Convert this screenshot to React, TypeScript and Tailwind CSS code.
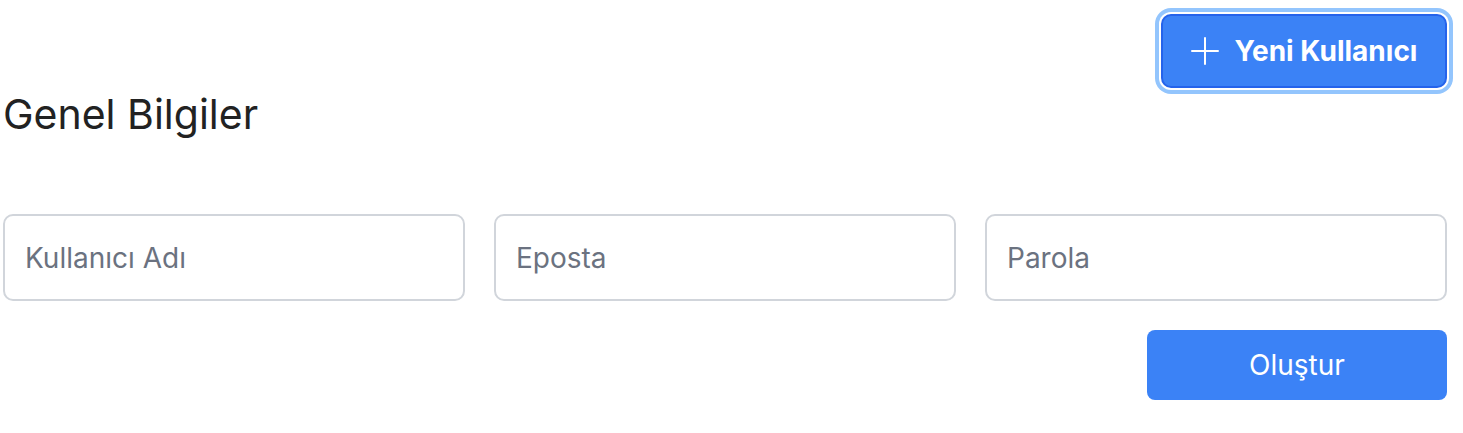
import React, { useState } from 'react';

const fields = [
  { name: 'username', placeholder: 'Kullanıcı Adı', type: 'text' },
  { name: 'email', placeholder: 'Eposta', type: 'email' },
  { name: 'password', placeholder: 'Parola', type: 'password' },
];

const PlusIcon = () => (
  <svg width="28" height="28" viewBox="0 0 28 28" fill="none" stroke="currentColor" strokeWidth="2" strokeLinecap="round">
    <path d="M1 14h26M14 1v26" />
  </svg>
);

const App: React.FC = () => {
  const [formData, setFormData] = useState({ username: '', email: '', password: '' });

  const handleChange = (e: React.ChangeEvent<HTMLInputElement>) => {
    setFormData({ ...formData, [e.target.name]: e.target.value });
  };

  return (
    <div className="min-h-screen bg-white pl-[3px] pr-4 pt-[14px] font-['Inter',sans-serif]">
      {/* Header action */}
      <div className="flex justify-end">
        <button className="flex h-[74px] w-[286px] items-center justify-center gap-4 rounded-[10px] border-2 border-[#2563eb] bg-[#3b82f6] text-[28px] font-bold text-white ring-4 ring-[#93c5fd] ring-offset-2">
          <PlusIcon />
          Yeni Kullanıcı
        </button>
      </div>

      <h2 className="mt-0.5 text-[41px] leading-[48px] text-[#222222]">Genel Bilgiler</h2>

      {/* Form */}
      <div className="mt-[76px] grid grid-cols-3 gap-[29px]">
        {fields.map((f) => (
          <input
            key={f.name}
            name={f.name}
            type={f.type}
            value={formData[f.name as keyof typeof formData]}
            onChange={handleChange}
            placeholder={f.placeholder}
            className="h-[87px] rounded-[10px] border-2 border-[#d1d5db] px-5 text-[28px] text-gray-800 outline-none placeholder:text-[#6b7280]"
          />
        ))}
      </div>

      <div className="mt-[29px] flex justify-end">
        <button className="h-[70px] w-[300px] rounded-lg bg-[#3b82f6] text-[28px] text-white">Oluştur</button>
      </div>
    </div>
  );
};

export default App;
